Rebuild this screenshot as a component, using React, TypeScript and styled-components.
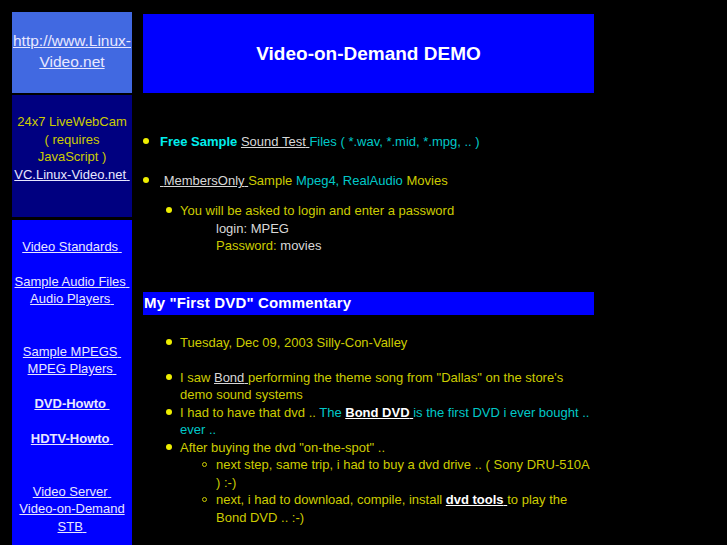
import React from "react";
import styled, { createGlobalStyle } from "styled-components";

const GlobalStyle = createGlobalStyle`
  html, body {
    margin: 0;
    background: #000;
  }
  body {
    font-family: "Liberation Sans", Arial, sans-serif;
    font-size: 13px;
    line-height: 17.5px;
    color: #cccc00;
  }
`;

const Page = styled.div`
  display: flex;
  align-items: flex-start;
  gap: 11px;
  padding: 12px 0 0 12px;
  height: 545px;
  box-sizing: border-box;
  overflow: hidden;
`;

const Sidebar = styled.div`
  width: 120px;
  display: flex;
  flex-direction: column;
`;

const tones: Record<string, string> = {
  light: "#4169e1",
  navy: "#000080",
  blue: "#0000ff",
};

const SideCell = styled.div<{ $tone: "light" | "navy" | "blue"; $h?: number; $gap?: number }>`
  background: ${(p) => tones[p.$tone]};
  height: ${(p) => (p.$h ? `${p.$h}px` : "auto")};
  margin-top: ${(p) => p.$gap || 0}px;
  text-align: center;
  box-sizing: border-box;
`;

const HomeCell = styled(SideCell)`
  display: flex;
  align-items: center;
  justify-content: center;
  font-size: 15.5px;
  line-height: 21px;
  padding-bottom: 4px;
`;

const CamCell = styled(SideCell)`
  padding-top: 18px;
  color: #cccc00;
`;

const NavCell = styled(SideCell)`
  padding: 17.5px 0 40px;
  min-height: 340px;
`;

const SideLink = styled.a<{ $bold?: boolean }>`
  color: #e8e8ff;
  text-decoration: underline;
  font-weight: ${(p) => (p.$bold ? "bold" : "normal")};
  cursor: pointer;
`;

const Blank = styled.div<{ $lines?: number }>`
  height: ${(p) => (p.$lines || 1) * 17.5}px;
`;

const Main = styled.div`
  width: 451px;
  padding-top: 2px;
`;

const Banner = styled.div`
  background: #0000ff;
  height: 79px;
  display: flex;
  align-items: center;
  justify-content: center;
  color: #fff;
  font-weight: bold;
  font-size: 19px;
`;

const SectionBar = styled.div`
  background: #0000ff;
  height: 23px;
  display: flex;
  align-items: center;
  padding-left: 1px;
  margin-top: 37px;
  color: #fff;
  font-weight: bold;
  font-size: 15px;
  letter-spacing: 0.15px;
`;

const List = styled.ul<{ $indent: number; $top?: number }>`
  list-style: none;
  margin: ${(p) => p.$top || 0}px 0 0;
  padding: 0 0 0 ${(p) => p.$indent}px;
`;

const Item = styled.li<{ $shape?: "disc" | "circle"; $offset?: number; $after?: number }>`
  margin-bottom: ${(p) => p.$after || 0}px;
  &::before {
    content: "";
    display: inline-block;
    box-sizing: border-box;
    width: ${(p) => (p.$shape === "circle" ? 5 : 6)}px;
    height: ${(p) => (p.$shape === "circle" ? 5 : 6)}px;
    border-radius: 50%;
    background: ${(p) => (p.$shape === "circle" ? "transparent" : "#eeee00")};
    border: ${(p) => (p.$shape === "circle" ? "1px solid #cccc00" : "none")};
    margin-left: -${(p) => p.$offset || 14}px;
    margin-right: ${(p) => (p.$offset || 14) - (p.$shape === "circle" ? 5 : 6)}px;
    vertical-align: 2px;
  }
`;

const Cyan = styled.span<{ $bold?: boolean }>`
  color: ${(p) => (p.$bold ? "#00eeee" : "#00c8c8")};
  font-weight: ${(p) => (p.$bold ? "bold" : "normal")};
`;

const Gray = styled.span`
  color: #d8d8d8;
`;

const TextLink = styled.a<{ $bold?: boolean }>`
  color: ${(p) => (p.$bold ? "#fff" : "#d8d8d8")};
  font-weight: ${(p) => (p.$bold ? "bold" : "normal")};
  text-decoration: underline;
  cursor: pointer;
`;

const Credentials = styled.div`
  padding-left: 36px;
`;

export default function App() {
  return (
    <>
      <GlobalStyle />
      <Page>
        <Sidebar>
          <HomeCell $tone="light" $h={81}>
            <SideLink>http://www.Linux-Video.net</SideLink>
          </HomeCell>
          <CamCell $tone="navy" $h={122} $gap={2}>
            24x7 LiveWebCam
            <br />( requires
            <br />
            JavaScript )
            <br />
            <SideLink>VC.Linux-Video.net{"\u00a0"}</SideLink>
          </CamCell>
          <NavCell $tone="blue" $gap={3}>
            <SideLink>Video Standards{"\u00a0"}</SideLink>
            <Blank />
            <SideLink>Sample Audio Files{"\u00a0"}</SideLink>
            <br />
            <SideLink>Audio Players{"\u00a0"}</SideLink>
            <Blank $lines={2} />
            <SideLink>Sample MPEGS{"\u00a0"}</SideLink>
            <br />
            <SideLink>MPEG Players{"\u00a0"}</SideLink>
            <Blank />
            <SideLink $bold>DVD-Howto{"\u00a0"}</SideLink>
            <Blank />
            <SideLink $bold>HDTV-Howto{"\u00a0"}</SideLink>
            <Blank $lines={2} />
            <SideLink>Video Server{"\u00a0"}</SideLink>
            <br />
            <SideLink>Video-on-Demand</SideLink>
            <br />
            <SideLink>STB{"\u00a0"}</SideLink>
          </NavCell>
        </Sidebar>

        <Main>
          <Banner>Video-on-Demand DEMO</Banner>

          <List $indent={17} $top={40}>
            <Item $offset={17} $after={21.5}>
              <Cyan $bold>Free Sample</Cyan> <TextLink>Sound Test{"\u00a0"}</TextLink>
              <Cyan>Files ( *.wav, *.mid, *.mpg, .. )</Cyan>
            </Item>
            <Item $offset={17}>
              <TextLink>{"\u00a0"}MembersOnly{"\u00a0"}</TextLink>Sample <Cyan>Mpeg4, RealAudio</Cyan> Movies
              <List $indent={20} $top={12.5}>
                <Item>
                  You will be asked to login and enter a password
                  <Credentials>
                    <Gray>login: MPEG</Gray>
                    <br />
                    Password: <Gray>movies</Gray>
                  </Credentials>
                </Item>
              </List>
            </Item>
          </List>

          <SectionBar>My "First DVD" Commentary</SectionBar>

          <List $indent={37} $top={19}>
            <Item $after={17.5}>Tuesday, Dec 09, 2003 Silly-Con-Valley</Item>
            <Item>
              I saw <TextLink>Bond{"\u00a0"}</TextLink>performing the theme song from "Dallas" on the store's demo
              sound systems
            </Item>
            <Item>
              I had to have that dvd .. <Cyan>The </Cyan>
              <TextLink $bold>Bond DVD{"\u00a0"}</TextLink>
              <Cyan>is the first DVD i ever bought .. ever ..</Cyan>
            </Item>
            <Item>
              After buying the dvd "on-the-spot" ..
              <List $indent={36}>
                <Item $shape="circle">next step, same trip, i had to buy a dvd drive .. ( Sony DRU-510A ) :-)</Item>
                <Item $shape="circle">
                  next, i had to download, compile, install <TextLink $bold>dvd tools{"\u00a0"}</TextLink>to play the Bond
                  DVD .. :-)
                </Item>
              </List>
            </Item>
          </List>
        </Main>
      </Page>
    </>
  );
}
